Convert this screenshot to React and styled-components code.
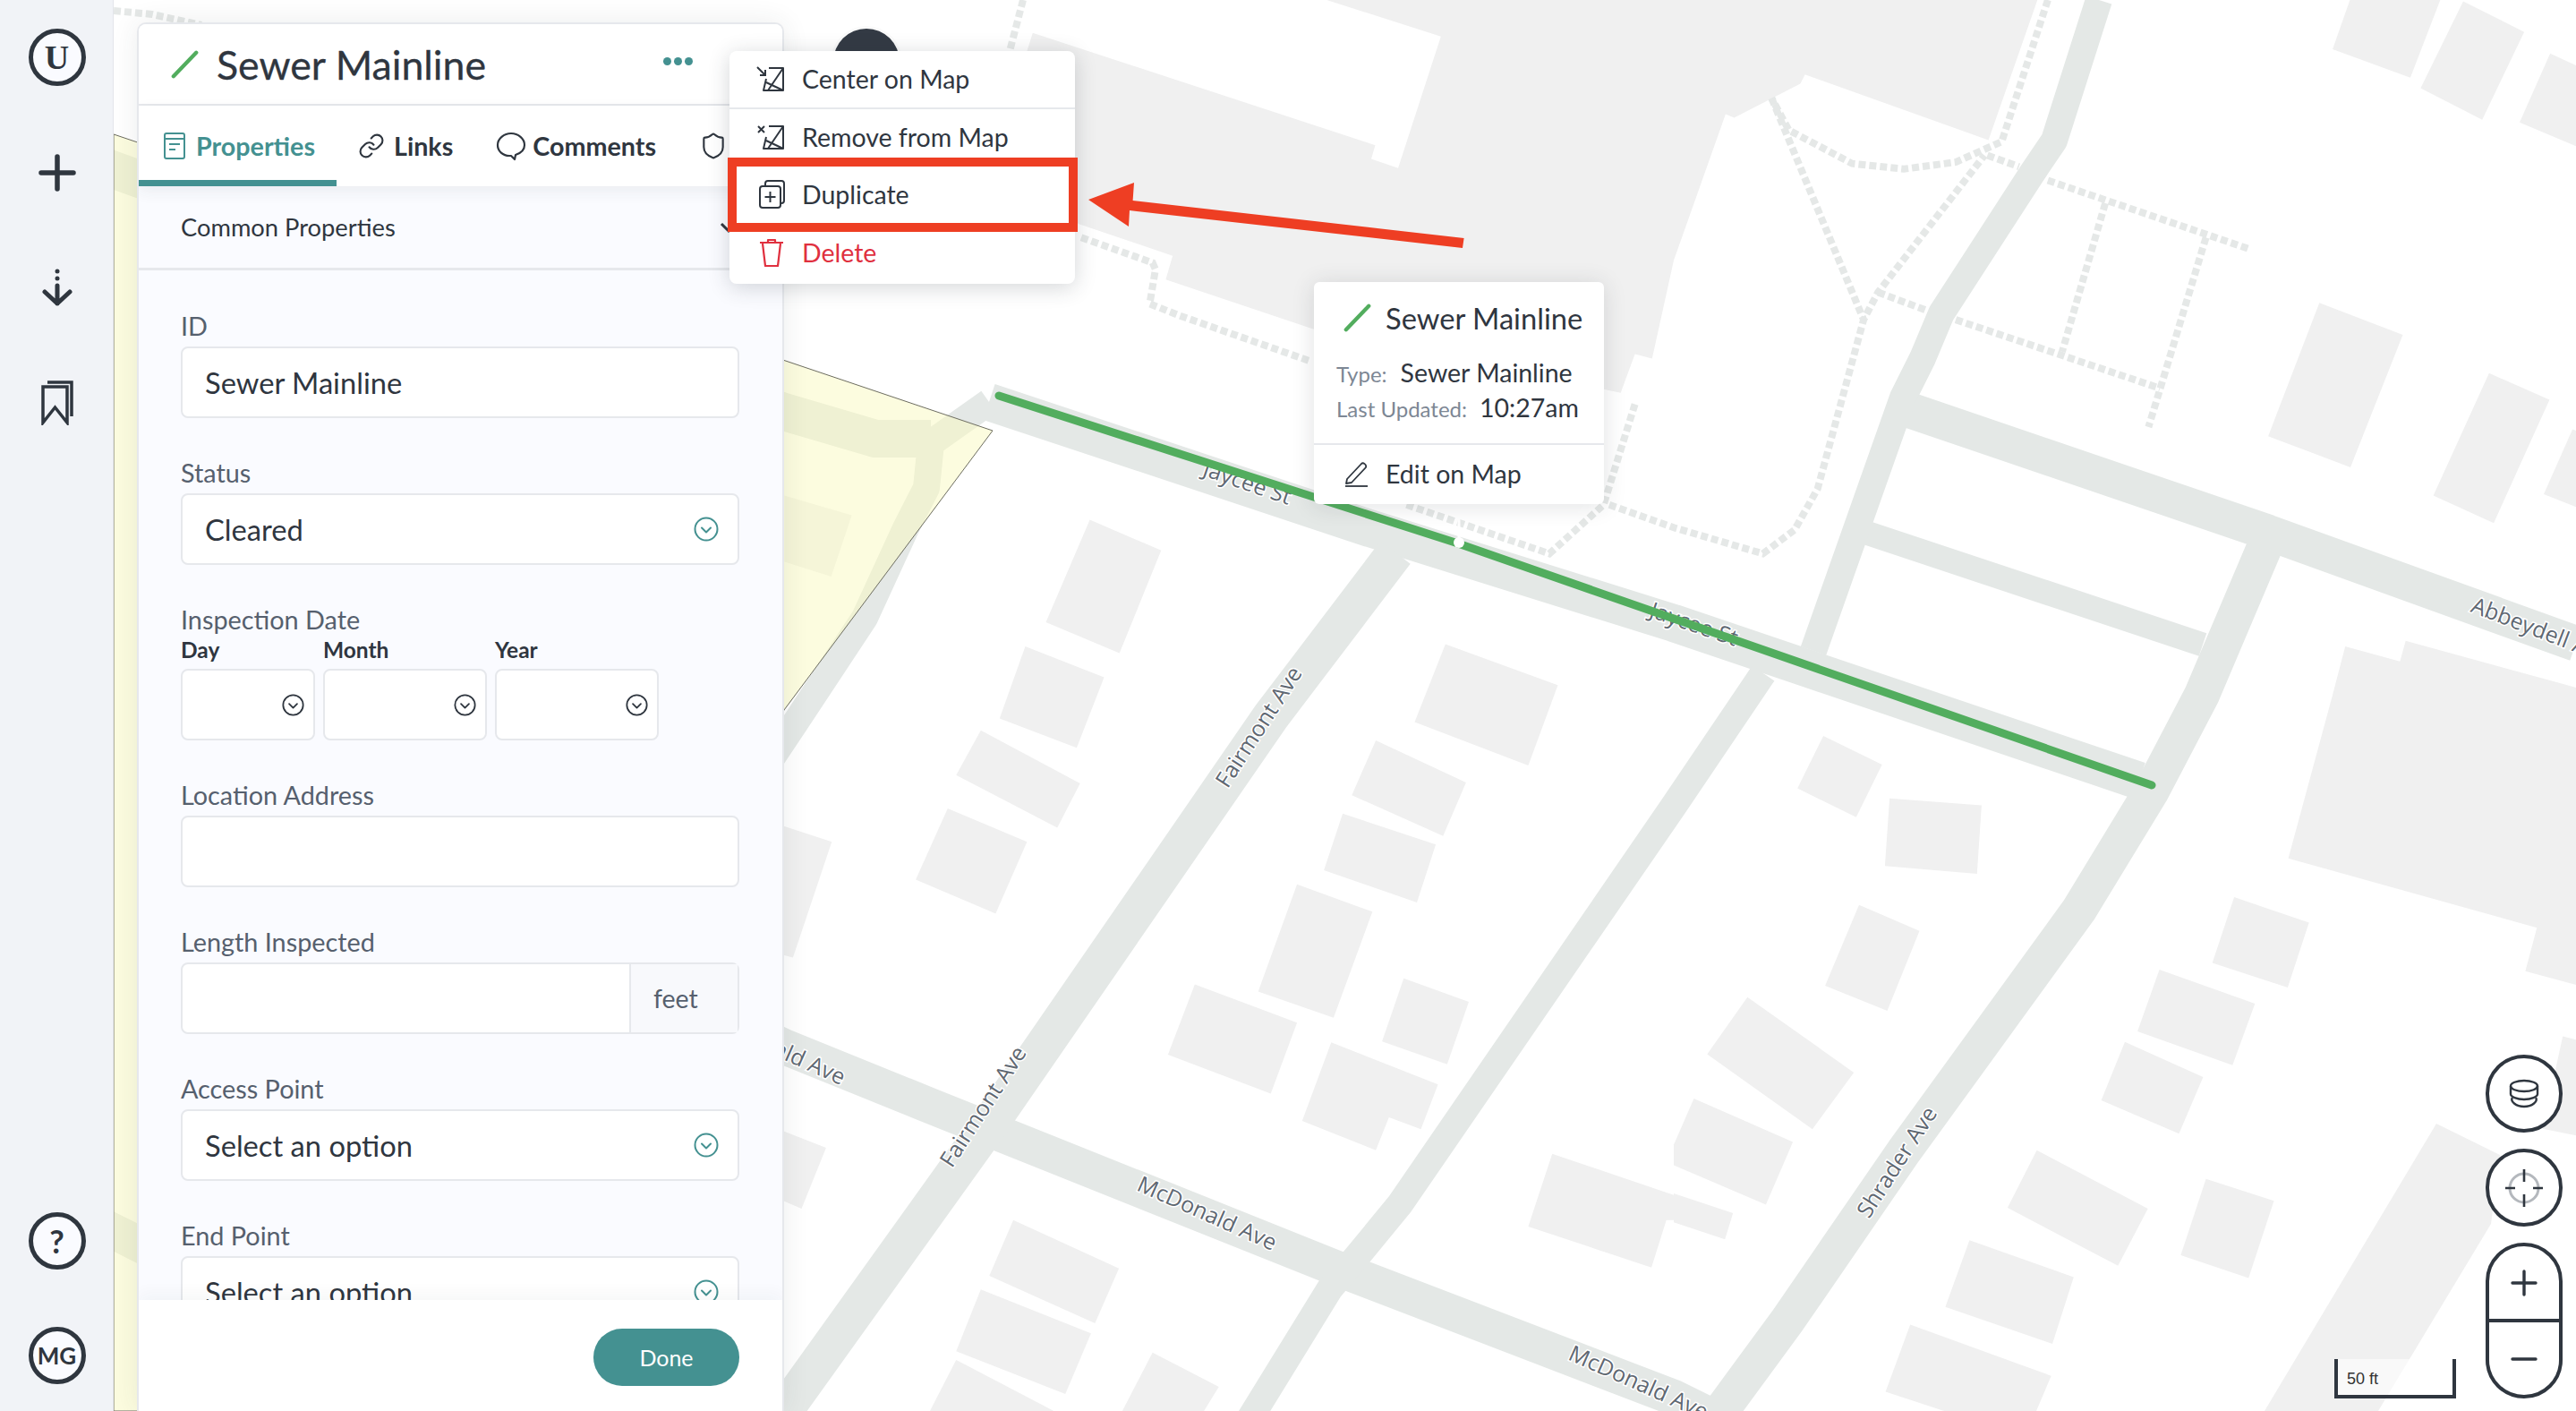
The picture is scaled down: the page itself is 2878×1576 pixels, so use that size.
import React from 'react'
import styled, { createGlobalStyle } from 'styled-components'
import { Link as LinkIcon, Shield } from 'lucide-react'

const INK = '#2f363f'
const TEAL = '#449191'
const LINE = '#e6e8ec'
const ROAD = '#e4e8e6'
const BUILDING = '#f0f0f0'
const RED = '#ee3e23'

const GlobalStyle = createGlobalStyle`
  html, body { margin: 0; padding: 0; }
  body { font-family: Lato, "Open Sans", sans-serif; color: ${INK}; background: #fff; }
  * { box-sizing: border-box; }
`

const Page = styled.div`
  display: flex;
  width: 2878px;
  height: 1576px;
  overflow: hidden;
`

/* left rail */
const Rail = styled.nav`
  flex: 0 0 127px;
  display: flex;
  flex-direction: column;
  justify-content: space-between;
  align-items: center;
  padding: 32px 0 30px 1px;
  background: #f1f3f7;
  border-right: 1px solid #e3e5ea;
`
const RailGroup = styled.div`
  display: flex;
  flex-direction: column;
  align-items: center;
  gap: ${p => p.$gap}px;
`
const RailItem = styled.div`
  width: 64px;
  height: 64px;
  display: flex;
  align-items: center;
  justify-content: center;
`
const RailCircle = styled.div`
  width: 64px;
  height: 64px;
  border-radius: 50%;
  border: 5px solid ${INK};
  background: #fafbff;
  display: flex;
  align-items: center;
  justify-content: center;
  font-weight: 700;
  font-size: ${p => p.$size}px;
  font-family: ${p => (p.$serif ? '"Liberation Serif", serif' : 'Lato, sans-serif')};
  color: ${INK};
`

/* map */
const MapArea = styled.main`
  position: relative;
  flex: 1;
  height: 100%;
  overflow: hidden;
  background: #fff;
`
const MapCanvas = styled.svg`
  position: absolute;
  inset: 0;
  width: 100%;
  height: 100%;
`
const Building = styled.polygon`
  fill: ${BUILDING};
`
const Road = styled.polyline`
  fill: none;
  stroke: ${ROAD};
  stroke-linejoin: round;
  stroke-width: ${p => p.$w}px;
`
const Footpath = styled.polyline`
  fill: none;
  stroke: #e5e8e7;
  stroke-width: 8px;
  stroke-dasharray: 8 4;
`
const Parcel = styled.polygon`
  fill: rgba(250, 250, 193, 0.52);
  stroke: #6d6d60;
  stroke-width: 1px;
`
const Sewer = styled.polyline`
  fill: none;
  stroke: #52ad5e;
  stroke-width: 9px;
  stroke-linecap: round;
  stroke-linejoin: round;
`
const Leader = styled.line`
  stroke: #fff;
  stroke-width: 3px;
`
const RoadLabel = styled.text`
  font-family: "Open Sans", sans-serif;
  font-size: 25px;
  fill: #5f6872;
  stroke: #fff;
  stroke-width: 3px;
  paint-order: stroke;
`

/* properties panel */
const Panel = styled.section`
  position: absolute;
  left: 26px;
  top: 25px;
  bottom: 0;
  width: 723px;
  display: flex;
  flex-direction: column;
  isolation: isolate;
  background: #fafbff;
  border: 2px solid ${LINE};
  border-bottom: 0;
  border-radius: 10px 10px 0 0;
  box-shadow: 0 0 30px rgba(40, 50, 60, 0.09);
  overflow: hidden;
`
const PanelHeader = styled.header`
  flex: 0 0 91px;
  display: flex;
  align-items: center;
  padding: 0 0 0 36px;
  background: #fff;
  border-bottom: 2px solid ${LINE};
`
const PanelTitle = styled.h1`
  margin: 0 0 0 19px;
  font-size: 44.7px;
  line-height: 50px;
  font-weight: 400;
  color: ${INK};
  -webkit-text-stroke: 0.3px ${INK};
`
const MoreDots = styled.div`
  display: flex;
  gap: 3px;
  margin-left: 198px;
  margin-bottom: 6px;
  span {
    width: 9px;
    height: 9px;
    border-radius: 50%;
    background: ${TEAL};
  }
`
const TabBar = styled.div`
  position: relative;
  z-index: 2;
  flex: 0 0 90px;
  display: flex;
  background: #fff;
  box-shadow: 0 6px 16px rgba(40, 50, 60, 0.07);
`
const Tab = styled.div`
  display: flex;
  align-items: center;
  gap: ${p => p.$gap || 10}px;
  padding: 7px 24px 0 ${p => p.$left || 24}px;
  font-size: 28.7px;
  font-weight: 700;
  color: ${p => (p.$active ? TEAL : INK)};
  border-bottom: 7px solid ${p => (p.$active ? TEAL : 'transparent')};
`
const SectionRow = styled.div`
  flex: 0 0 94px;
  display: flex;
  align-items: center;
  justify-content: space-between;
  padding: 0 48px 0 47px;
  font-size: 27.3px;
  color: ${INK};
  border-bottom: 3px solid ${LINE};
`
const Form = styled.div`
  flex: 1;
  min-height: 0;
  overflow: hidden;
  padding: 47px 48px 0 47px;
`
const Field = styled.div`
  margin-bottom: 46px;
`
const FieldLabel = styled.div`
  height: 30px;
  line-height: 30px;
  font-size: 28.8px;
  color: #56606e;
`
const InputBox = styled.div`
  height: 80px;
  margin-top: 8px;
  display: flex;
  align-items: center;
  justify-content: ${p => (p.$end ? 'flex-end' : 'space-between')};
  padding-left: 25px;
  padding-right: ${p => p.$right || 25}px;
  font-size: 32.7px;
  color: ${INK};
  background: #fff;
  border: 2px solid ${LINE};
  border-radius: 8px;
`
const AddonBox = styled(InputBox)`
  padding: 0;
`
const Addon = styled.div`
  width: 121px;
  height: 100%;
  display: flex;
  align-items: center;
  padding-left: 25px;
  font-size: 28.5px;
  color: #56606e;
  background: #f8f9fc;
  border-left: 2px solid ${LINE};
`
const DateRow = styled.div`
  display: flex;
  gap: 9px;
  margin-top: 6px;
`
const DateColumn = styled.div`
  width: ${p => p.$w}px;
`
const DateLabel = styled.div`
  height: 26px;
  line-height: 26px;
  font-size: 24.5px;
  font-weight: 700;
  color: ${INK};
`
const PanelFooter = styled.footer`
  position: relative;
  z-index: 2;
  flex: 0 0 124px;
  display: flex;
  justify-content: flex-end;
  padding: 32px 48px 0 0;
  background: #fff;
  box-shadow: 0 -8px 16px rgba(40, 50, 60, 0.035);
`
const DoneButton = styled.button`
  width: 163px;
  height: 64px;
  border: 0;
  border-radius: 32px;
  background: ${TEAL};
  color: #fff;
  font-family: inherit;
  font-size: 25px;
`

/* avatar peeking out behind the menu */
const Peek = styled.div`
  position: absolute;
  left: 804px;
  top: 32px;
  width: 74px;
  height: 74px;
  border-radius: 50%;
  background: #333a44;
  box-shadow: 0 0 0 3px #fafafa;
`

/* context menu */
const Menu = styled.ul`
  position: absolute;
  left: 688px;
  top: 57px;
  width: 386px;
  height: 260px;
  margin: 0;
  padding: 0;
  list-style: none;
  background: #fff;
  border-radius: 8px;
  box-shadow: 0 4px 24px rgba(40, 50, 60, 0.2);
`
const MenuItem = styled.li`
  height: ${p => p.$h || 64.5}px;
  display: flex;
  align-items: center;
  gap: 18px;
  padding-left: 29px;
  font-size: 28.5px;
  color: ${p => (p.$danger ? '#e0303f' : INK)};
  border-bottom: ${p => (p.$last ? 0 : `2px solid ${LINE}`)};
`
const MenuIcon = styled.svg`
  flex: 0 0 34px;
  width: 34px;
  height: 34px;
`
const Highlight = styled.div`
  position: absolute;
  left: 686px;
  top: 176px;
  width: 391px;
  height: 83px;
  border: 10px solid ${RED};
`
const ArrowMark = styled.svg`
  position: absolute;
  left: 1089px;
  top: 200px;
  width: 425px;
  height: 80px;
`

/* map callout */
const Callout = styled.div`
  position: absolute;
  left: 1341px;
  top: 315px;
  width: 324px;
  height: 248px;
  background: #fff;
  border-radius: 6px;
  box-shadow: 0 2px 26px rgba(40, 50, 60, 0.14);
`
const CalloutBody = styled.div`
  height: 182px;
  padding: 19px 0 0 25px;
  border-bottom: 2px solid ${LINE};
`
const CalloutTitle = styled.div`
  display: flex;
  align-items: center;
  gap: 15px;
  padding-left: 8px;
  height: 42px;
  font-size: 32.7px;
  color: ${INK};
`
const MetaRow = styled.div`
  display: flex;
  align-items: baseline;
  gap: ${p => p.$gap}px;
  height: 39px;
  line-height: 39px;
  margin-top: ${p => p.$top || 0}px;
  font-size: 28.5px;
  color: ${INK};
  span {
    font-size: 24px;
    color: #7d8794;
  }
`
const CalloutAction = styled.div`
  height: 64px;
  display: flex;
  align-items: center;
  gap: 17px;
  padding-left: 33px;
  font-size: 28.5px;
  color: ${INK};
`

/* map controls */
const Controls = styled.div`
  position: absolute;
  right: 15px;
  top: 1178px;
  width: 86px;
  display: flex;
  flex-direction: column;
  gap: 18px;
`
const ControlButton = styled.div`
  height: 87px;
  border: 4px solid ${INK};
  border-radius: 43px;
  background: #fff;
  display: flex;
  align-items: center;
  justify-content: center;
`
const ZoomPill = styled.div`
  height: 174px;
  border: 4px solid ${INK};
  border-radius: 43px;
  background: #fff;
  display: flex;
  flex-direction: column;
  overflow: hidden;
`
const ZoomHalf = styled.div`
  flex: 1;
  display: flex;
  align-items: center;
  justify-content: center;
  & + & {
    border-top: 4px solid ${INK};
  }
`
const ScaleBar = styled.div`
  position: absolute;
  left: 2481px;
  top: 1518px;
  width: 136px;
  height: 44px;
  padding: 10px 0 0 10px;
  font-family: "Liberation Sans", Arial, sans-serif;
  font-size: 18px;
  line-height: 24px;
  color: #333;
  background: rgba(255, 255, 255, 0.6);
  border: 4px solid ${INK};
  border-top: 0;
`

/* tile helpers: coordinates below were read from 1568px wide crops of the map */
const tile = (ox, oy, w) => (...v) => {
  const out = []
  for (let i = 0; i < v.length; i += 2) out.push([ox + (v[i] * w) / 1568, oy + (v[i + 1] * 800) / 1568])
  return out
}
const A = tile(870, 0, 1000)
const B = tile(1870, 0, 1008)
const C = tile(870, 776, 1000)
const D = tile(1870, 776, 1008)
const pts = list => list.map(p => p.map(n => n.toFixed(1)).join(',')).join(' ')

const buildings = [
  [...A(960, 0, 1160, 80, 1085, 368, 1038, 348, 1045, 318, 445, 72, 400, 250, 525, 490, 690, 560, 678, 612, 935, 720, 1475, 860, 1500, 775, 1530, 785), ...B(0, 570, 90, 250, 105, 258, 220, 183, 228, 163, 547, 307, 632, 0)],
  B(1175, 0, 1332, 0, 1280, 170, 1145, 108),
  B(1372, 3, 1478, 70, 1405, 262, 1298, 193),
  B(1523, 117, 1568, 143, 1568, 320, 1470, 268),
  B(1122, 663, 1267, 733, 1176, 1023, 1033, 955),
  B(1417, 817, 1522, 875, 1425, 1145, 1320, 1085),
  B(1562, 940, 1568, 943, 1568, 1110, 1512, 1082),
  [...B(1167, 1415, 1262, 1448, 1272, 1403, 1568, 1505), ...D(1568, 635, 1480, 605, 1500, 510, 1068, 358, 1145, 0)],
  D(260, 90, 362, 153, 317, 268, 215, 205),
  D(375, 227, 535, 242, 527, 392, 367, 375),
  D(322, 460, 427, 517, 371, 692, 263, 637),
  D(128, 662, 313, 827, 241, 951, 58, 787),
  D(35, 884, 207, 979, 160, 1116, 0, 1030, 0, 985),
  D(0, 1092, 103, 1135, 89, 1192, 0, 1155),
  D(974, 443, 1104, 499, 1067, 641, 936, 587),
  D(844, 602, 1010, 676, 971, 811, 806, 737),
  D(784, 760, 920, 837, 878, 961, 743, 888),
  D(631, 997, 824, 1125, 772, 1250, 580, 1123),
  D(925, 1060, 1043, 1108, 999, 1277, 881, 1227),
  D(514, 1194, 695, 1275, 658, 1421, 472, 1340),
  D(411, 1379, 656, 1491, 630, 1568, 470, 1568, 368, 1526),
  D(1545, 748, 1568, 755, 1568, 965, 1510, 950),
  [[2722, 1255], [2793, 1290], [2783, 1367], [2657, 1576], [2530, 1576]],
  [...A(432, 1415, 570, 1483), ...C(522, 116, 387, 52)],
  [...A(1168, 1410, 1365, 1500), ...C(1313, 155, 1114, 60)],
  A(545, 1138, 670, 1205, 597, 1430, 468, 1362),
  A(10, 1085, 128, 1128, 92, 1262, 10, 1230),
  C(354, 78, 528, 194, 488, 291, 311, 176),
  C(296, 249, 435, 322, 380, 479, 240, 405),
  C(8, 287, 93, 322, 25, 575, 8, 570),
  C(8, 955, 83, 992, 40, 1125, 8, 1108),
  C(1046, 100, 1204, 192, 1164, 309, 1004, 220),
  C(988, 260, 1151, 328, 1118, 455, 955, 384),
  C(908, 415, 1040, 475, 972, 707, 840, 650),
  C(729, 634, 908, 718, 862, 873, 682, 788),
  C(1095, 621, 1209, 672, 1171, 809, 1057, 759),
  C(968, 761, 1155, 853, 1125, 951, 1069, 925, 1046, 997, 917, 933),
  C(1355, 1005, 1568, 1095, 1568, 1150, 1555, 1150, 1529, 1254, 1313, 1164),
  C(411, 1150, 596, 1256, 554, 1376, 369, 1272),
  C(354, 1302, 547, 1398, 502, 1531, 311, 1437),
  C(311, 1456, 482, 1568, 265, 1568),
  C(655, 1440, 771, 1515, 745, 1568, 602, 1568),
]

const roads = [
  { w: 42, p: [[1105, 449], [1530, 590], [1870, 696], [2390, 872]] },
  { w: 30, p: [[1105, 449], [1040, 495], [1035, 545], [1012, 590], [966, 690], [890, 805], [860, 850]] },
  { w: 42, p: [[1040, 490], [978, 490], [876, 460], [100, 180]] },
  { w: 40, p: [[100, 1362], [180, 1402]] },
  { w: 40, p: [[700, 1085], [876, 1169], [1039, 1235], [1489, 1415], [1870, 1561], [2000, 1625]] },
  { w: 42, p: [[1559, 617], [1420, 800], [1106, 1255], [883, 1566], [860, 1610]] },
  { w: 30, p: [[1970, 752], [1870, 900], [1564, 1345], [1518, 1401], [1486, 1439], [1393, 1590]] },
  { w: 40, p: [[2539, 590], [2460, 776], [2404, 883], [2323, 1016], [2127, 1286], [1997, 1475], [1928, 1569], [1900, 1610]] },
  { w: 40, p: [[2127, 456], [2532, 594], [2878, 719]] },
  { w: 27, p: [[2082, 594], [2461, 720]] },
  { w: 30, p: [[2345, 0], [2295, 157], [2270, 194], [2169, 350], [2148, 400], [2126, 444], [2026, 727]] },
]

const footpaths = [
  A(428, 0, 405, 110),
  A(530, 520, 655, 575, 660, 590, 650, 665, 700, 690, 930, 790),
  A(1100, 1105, 1350, 1212, 1445, 1105, 1500, 885),
  [...A(1455, 1105), ...B(0, 1155, 155, 1212, 210, 1160, 250, 1070, 330, 700, 355, 640, 540, 340)],
  B(650, 0, 570, 310, 490, 355, 400, 370, 310, 358, 200, 285, 170, 215),
  B(170, 215, 330, 700),
  B(355, 640, 440, 680),
  B(545, 340, 600, 365),
  B(650, 395, 1000, 545),
  B(750, 445, 675, 770),
  B(925, 520, 825, 935),
  B(490, 700, 845, 850),
  [[127, 12], [170, 16], [225, 28]],
]

const labels = [
  { t: 'Jaycee St', x: 1393, y: 541, r: 19 },
  { t: 'Jaycee St', x: 1892, y: 699, r: 19 },
  { t: 'Fairmont Ave', x: 1408, y: 813, r: -57 },
  { t: 'Fairmont Ave', x: 1100, y: 1237, r: -57 },
  { t: 'McDonald Ave', x: 866, y: 1172, r: 24 },
  { t: 'McDonald Ave', x: 1348, y: 1357, r: 24 },
  { t: 'McDonald Ave', x: 1830, y: 1546, r: 24 },
  { t: 'Abbeydell Ave', x: 2838, y: 706, r: 21 },
  { t: 'Shrader Ave', x: 2121, y: 1299, r: -57 },
]

const ParcelMap = () => (
  <MapCanvas viewBox="127 0 2751 1576">
    {buildings.map((b, i) => <Building key={i} points={pts(b)} />)}
    {roads.map((r, i) => <Road key={i} $w={r.w} points={pts(r.p)} />)}
    {footpaths.map((f, i) => <Footpath key={i} points={pts(f)} />)}
    <Parcel points="127,150 1109,481 876,793 500,1576 127,1576" />
    {labels.map((l, i) => (
      <RoadLabel key={i} textAnchor="middle" dominantBaseline="middle" transform={`translate(${l.x} ${l.y}) rotate(${l.r})`}>{l.t}</RoadLabel>
    ))}
    <Sewer points="1116,442 1629,607 1870,691 2404,877" />
    <Leader x1="1630" y1="560" x2="1630" y2="606" />
    <circle cx="1630" cy="606" r="6" fill="#fff" />
  </MapCanvas>
)

const Slash = ({ size = 34 }) => (
  <svg width={size} height={size} viewBox="0 0 34 34">
    <line x1="3" y1="31" x2="30" y2="3" stroke="#52ad5e" strokeWidth="4.6" strokeLinecap="round" />
  </svg>
)
const ChevronCircle = ({ color = TEAL, size = 28 }) => (
  <svg width={size} height={size} viewBox="0 0 28 28" fill="none" stroke={color} strokeWidth="2">
    <circle cx="14" cy="14" r="12.5" />
    <path d="M9 12.5l5 5 5-5" strokeLinecap="round" strokeLinejoin="round" />
  </svg>
)
const CenterGlyph = () => (
  <MenuIcon viewBox="0 0 34 34" fill="none" stroke={INK} strokeWidth="2">
    <path d="M15 5h16v25H9l3-13" strokeLinejoin="round" />
    <path d="M31 5L14 30M12 21l19 9" />
    <path d="M2 4l9 9M11 7v6H5" />
  </MenuIcon>
)
const RemoveGlyph = () => (
  <MenuIcon viewBox="0 0 34 34" fill="none" stroke={INK} strokeWidth="2">
    <path d="M15 5h16v25H9l3-13" strokeLinejoin="round" />
    <path d="M31 5L14 30M12 21l19 9" />
    <path d="M3 5l7 7M10 5l-7 7" />
  </MenuIcon>
)

const App = () => (
  <Page>
    <GlobalStyle />
    <Rail>
      <RailGroup $gap={64.5}>
        <RailCircle $size={38} $serif>U</RailCircle>
        <RailItem>
          <svg width="42" height="42" viewBox="0 0 42 42" stroke={INK} strokeWidth="5.5" strokeLinecap="round"><path d="M21 3v36M3 21h36" /></svg>
        </RailItem>
        <RailItem>
          <svg width="36" height="42" viewBox="0 0 36 42" fill="none" stroke={INK} strokeWidth="5" strokeLinecap="round" strokeLinejoin="round">
            <circle cx="18" cy="3" r="2.5" fill={INK} stroke="none" />
            <circle cx="18" cy="11" r="2.5" fill={INK} stroke="none" />
            <path d="M18 19v20M4 26l14 13 14-13" />
          </svg>
        </RailItem>
        <RailItem>
          <svg width="36" height="50" viewBox="0 0 36 50" fill="none" stroke={INK} strokeWidth="3.5" strokeLinejoin="miter">
            <path d="M2 7h27v40L15.5 30 2 47z" />
            <path d="M7 2h27v38" />
          </svg>
        </RailItem>
      </RailGroup>
      <RailGroup $gap={64}>
        <RailCircle $size={36}>?</RailCircle>
        <RailCircle $size={26}>MG</RailCircle>
      </RailGroup>
    </Rail>

    <MapArea>
      <ParcelMap />
      <Peek />

      <Panel>
        <PanelHeader>
          <Slash size={32} />
          <PanelTitle>Sewer Mainline</PanelTitle>
          <MoreDots><span /><span /><span /></MoreDots>
        </PanelHeader>
        <TabBar>
          <Tab $active $left={28} $gap={12}>
            <svg width="24" height="32" viewBox="0 0 24 32" fill="none" stroke={TEAL} strokeWidth="2">
              <rect x="1" y="2" width="22" height="28" rx="2" />
              <path d="M1 8h22M6 14h12M6 20h7" />
            </svg>
            Properties
          </Tab>
          <Tab>
            <LinkIcon size={30} strokeWidth={1.7} />
            Links
          </Tab>
          <Tab $gap={7}>
            <svg width="34" height="34" viewBox="0 0 34 34" fill="none" stroke={INK} strokeWidth="2.2" strokeLinejoin="round">
              <path d="M17 3C9 3 2 9 2 16c0 7 6 12 13 12h2l4 4 1-5c6-2 10-6 10-11C32 9 25 3 17 3z" />
            </svg>
            Comments
          </Tab>
          <Tab>
            <Shield size={32} strokeWidth={1.6} />
          </Tab>
        </TabBar>
        <SectionRow>
          Common Properties
          <svg width="24" height="24" viewBox="0 0 24 24" fill="none" stroke={INK} strokeWidth="3"><path d="M4 8l8 8 8-8" /></svg>
        </SectionRow>
        <Form>
          <Field>
            <FieldLabel>ID</FieldLabel>
            <InputBox>Sewer Mainline</InputBox>
          </Field>
          <Field>
            <FieldLabel>Status</FieldLabel>
            <InputBox $right={21}>Cleared<ChevronCircle /></InputBox>
          </Field>
          <Field>
            <FieldLabel>Inspection Date</FieldLabel>
            <DateRow>
              <DateColumn $w={150}>
                <DateLabel>Day</DateLabel>
                <InputBox $right={10} $end><ChevronCircle color={INK} size={25} /></InputBox>
              </DateColumn>
              <DateColumn $w={183}>
                <DateLabel>Month</DateLabel>
                <InputBox $right={10} $end><ChevronCircle color={INK} size={25} /></InputBox>
              </DateColumn>
              <DateColumn $w={183}>
                <DateLabel>Year</DateLabel>
                <InputBox $right={10} $end><ChevronCircle color={INK} size={25} /></InputBox>
              </DateColumn>
            </DateRow>
          </Field>
          <Field>
            <FieldLabel>Location Address</FieldLabel>
            <InputBox />
          </Field>
          <Field>
            <FieldLabel>Length Inspected</FieldLabel>
            <AddonBox><span /><Addon>feet</Addon></AddonBox>
          </Field>
          <Field>
            <FieldLabel>Access Point</FieldLabel>
            <InputBox $right={21}>Select an option<ChevronCircle /></InputBox>
          </Field>
          <Field>
            <FieldLabel>End Point</FieldLabel>
            <InputBox $right={21}>Select an option<ChevronCircle /></InputBox>
          </Field>
        </Form>
        <PanelFooter>
          <DoneButton>Done</DoneButton>
        </PanelFooter>
      </Panel>

      <Menu>
        <MenuItem><CenterGlyph />Center on Map</MenuItem>
        <MenuItem><RemoveGlyph />Remove from Map</MenuItem>
        <MenuItem>
          <MenuIcon viewBox="0 0 34 34" fill="none" stroke={INK} strokeWidth="2">
            <rect x="5" y="8" width="23" height="24" rx="3" />
            <path d="M11 8V5a3 3 0 0 1 3-3h15a3 3 0 0 1 3 3v19a3 3 0 0 1-3 3h-1M16.500 14v12M10.500 20h12" />
          </MenuIcon>
          Duplicate
        </MenuItem>
        <MenuItem $danger $last $h={62}>
          <MenuIcon viewBox="0 0 34 34" fill="none" stroke="#e0303f" strokeWidth="2.2">
            <path d="M5 6h26M14 6V3h8v3M8 7l3 25h14l3-25" strokeLinejoin="round" />
          </MenuIcon>
          Delete
        </MenuItem>
      </Menu>
      <Highlight />
      <ArrowMark viewBox="0 0 425 80">
        <polygon fill={RED} points="0,23 51,4 49.6,24 419.6,66 418,77 46,35 45,53" />
      </ArrowMark>

      <Callout>
        <CalloutBody>
          <CalloutTitle><Slash size={32} />Sewer Mainline</CalloutTitle>
          <MetaRow $gap={15} $top={21}><span>Type:</span>Sewer Mainline</MetaRow>
          <MetaRow $gap={14} $top={0}><span>Last Updated:</span>10:27am</MetaRow>
        </CalloutBody>
        <CalloutAction>
          <svg width="30" height="30" viewBox="0 0 30 30" fill="none" stroke={INK} strokeWidth="1.8" strokeLinejoin="round">
            <path d="M4 21L20 4c2-2 6 1 5 4L9 25l-6 1z" />
            <path d="M2 29h25" />
          </svg>
          Edit on Map
        </CalloutAction>
      </Callout>

      <ScaleBar>50 ft</ScaleBar>
      <Controls>
        <ControlButton>
          <svg width="36" height="36" viewBox="0 0 36 36" fill="none" stroke={INK} strokeWidth="2.4">
            <ellipse cx="18" cy="9" rx="15" ry="6" />
            <path d="M3 9v9c0 3 7 6 15 6s15-3 15-6V9" />
            <path d="M5 22c-3 4 4 10 13 10s16-6 13-10" />
          </svg>
        </ControlButton>
        <ControlButton>
          <svg width="44" height="44" viewBox="0 0 44 44" fill="none">
            <circle cx="22" cy="22" r="16" stroke="#b4b8bd" strokeWidth="3" />
            <path d="M22 1v14M22 29v14M1 22h11M32 22h11" stroke={INK} strokeWidth="2.6" />
          </svg>
        </ControlButton>
        <ZoomPill>
          <ZoomHalf>
            <svg width="30" height="30" viewBox="0 0 30 30" stroke={INK} strokeWidth="3.4" strokeLinecap="round"><path d="M15 2v26M2 15h26" /></svg>
          </ZoomHalf>
          <ZoomHalf>
            <svg width="30" height="30" viewBox="0 0 30 30" stroke={INK} strokeWidth="3.4" strokeLinecap="round"><path d="M2 15h26" /></svg>
          </ZoomHalf>
        </ZoomPill>
      </Controls>
    </MapArea>
  </Page>
)

export default App
